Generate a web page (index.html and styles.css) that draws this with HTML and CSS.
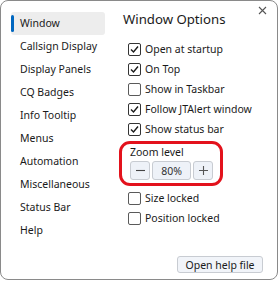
FILE: index.html
```html
<!DOCTYPE html>
<html>
<head>
<meta charset="utf-8">
<link rel="stylesheet" href="styles.css">
</head>
<body>
<div class="window">
  <button class="close" aria-label="Close"><svg width="9" height="9" viewBox="0 0 9 9"><path d="M1 1L8 8M8 1L1 8" stroke="#555" stroke-width="1.1" fill="none"/></svg></button>
  <nav class="sidebar">
    <div class="item active">Window</div>
    <div class="item">Callsign Display</div>
    <div class="item">Display Panels</div>
    <div class="item">CQ Badges</div>
    <div class="item">Info Tooltip</div>
    <div class="item">Menus</div>
    <div class="item">Automation</div>
    <div class="item">Miscellaneous</div>
    <div class="item">Status Bar</div>
    <div class="item">Help</div>
  </nav>
  <main class="panel">
    <h1 class="title">Window Options</h1>
    <div class="checks first">
      <label class="check"><span class="box on"><svg width="11" height="11" viewBox="0 0 11 11"><path d="M2 5.5L4.5 8L9 2.5" stroke="#1a1a1a" stroke-width="1.4" fill="none"/></svg></span>Open at startup</label>
      <label class="check"><span class="box on"><svg width="11" height="11" viewBox="0 0 11 11"><path d="M2 5.5L4.5 8L9 2.5" stroke="#1a1a1a" stroke-width="1.4" fill="none"/></svg></span>On Top</label>
      <label class="check"><span class="box"></span>Show in Taskbar</label>
      <label class="check"><span class="box on"><svg width="11" height="11" viewBox="0 0 11 11"><path d="M2 5.5L4.5 8L9 2.5" stroke="#1a1a1a" stroke-width="1.4" fill="none"/></svg></span>Follow JTAlert window</label>
      <label class="check"><span class="box on"><svg width="11" height="11" viewBox="0 0 11 11"><path d="M2 5.5L4.5 8L9 2.5" stroke="#1a1a1a" stroke-width="1.4" fill="none"/></svg></span>Show status bar</label>
    </div>
    <div class="zoom">
      <div class="zoom-label">Zoom level</div>
      <div class="zoom-controls">
        <button class="zbtn"><svg width="9" height="9" viewBox="0 0 9 9"><path d="M0 4.5H9" stroke="#444" stroke-width="1.1"/></svg></button>
        <span class="zval">80%</span>
        <button class="zbtn"><svg width="9" height="9" viewBox="0 0 9 9"><path d="M0 4.5H9M4.5 0V9" stroke="#555" stroke-width="1.1"/></svg></button>
      </div>
    </div>
    <div class="checks after">
      <label class="check"><span class="box"></span>Size locked</label>
      <label class="check"><span class="box"></span>Position locked</label>
    </div>
    <div class="footer">
      <button class="help">Open help file</button>
    </div>
  </main>
</div>
</body>
</html>
```
FILE: styles.css
```css
html, body {
  margin: 0;
  padding: 0;
  background: #ffffff;
}
body {
  font-family: "Noto Sans", "Liberation Sans", sans-serif;
  font-size: 10.5px;
  color: #1a1a1a;
}
.window {
  position: relative;
  box-sizing: border-box;
  width: 278px;
  height: 280px;
  border: 1px solid #8a8a8a;
  border-radius: 8px;
  background: #ffffff;
  display: flex;
  padding: 11px 0 0 10px;
}
.close {
  position: absolute;
  top: 3px;
  right: 8px;
  width: 14px;
  height: 12px;
  padding: 0;
  border: 0;
  background: none;
  display: flex;
  align-items: center;
  justify-content: center;
}
.sidebar {
  flex: 0 0 94px;
  width: 94px;
  display: flex;
  flex-direction: column;
}
.item {
  position: relative;
  height: 23px;
  line-height: 23px;
  padding-left: 9px;
  white-space: nowrap;
  border-radius: 3px;
}
.item.active {
  background: #ededed;
}
.item.active::before {
  content: "";
  position: absolute;
  left: 0;
  top: 3px;
  width: 3px;
  height: 17px;
  border-radius: 2px;
  background: #0067c0;
}
.panel {
  flex: 1 1 auto;
  min-width: 0;
  display: flex;
  flex-direction: column;
  padding-left: 18px;
  padding-right: 14px;
}
.title {
  margin: -2px 0 0 0;
  font-size: 13.2px;
  font-weight: normal;
  line-height: 18px;
}
.checks {
  display: flex;
  flex-direction: column;
}
.checks.first {
  margin-top: 11px;
}
.checks.after {
  margin-top: 2px;
}
.check {
  display: flex;
  align-items: center;
  height: 20px;
  margin-left: 5px;
  white-space: nowrap;
}
.box {
  box-sizing: border-box;
  width: 13px;
  height: 13px;
  border: 1px solid #5a5a5a;
  border-radius: 2px;
  margin-right: 4px;
  display: flex;
  align-items: center;
  justify-content: center;
  background: #fff;
}
.box.on {
  border-color: #333;
}
.zoom {
  align-self: flex-start;
  margin-top: 2px;
  margin-left: -4px;
  padding: 1px 7px 3px 8px;
  border: 3px solid #e3121c;
  border-radius: 11px;
}
.zoom-label {
  line-height: 14px;
}
.zoom-controls {
  display: flex;
  gap: 2px;
  margin-top: 2px;
}
.zbtn, .zval {
  box-sizing: border-box;
  height: 19px;
  border: 1px solid #c8ccd2;
  border-radius: 3px;
  background: #eef2f8;
  font-family: inherit;
  font-size: 10.5px;
  color: #333;
  display: flex;
  align-items: center;
  justify-content: center;
  padding: 0;
}
.zbtn {
  width: 20px;
}
.zval {
  width: 39px;
}
.footer {
  margin-top: auto;
  display: flex;
  justify-content: flex-end;
  padding-bottom: 6px;
}
.help {
  box-sizing: border-box;
  width: 86px;
  height: 17px;
  border: 1px solid #c8ccd2;
  border-radius: 3px;
  background: #f1f4f9;
  font-family: inherit;
  font-size: 10.5px;
  color: #1a1a1a;
  padding: 0;
}
```
